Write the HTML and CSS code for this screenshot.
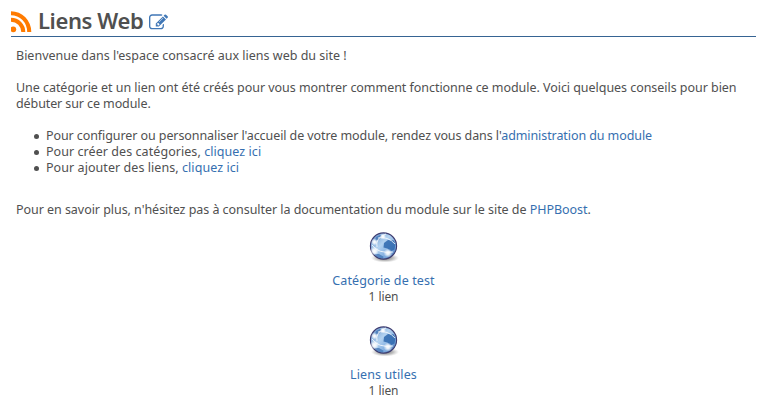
FILE: index.html
```html
<!DOCTYPE html>
<html lang="fr">
<head>
<meta charset="utf-8">
<title>Liens Web</title>
<link rel="stylesheet" href="styles.css">
</head>
<body>
<svg class="defs" width="0" height="0" aria-hidden="true">
  <defs>
    <linearGradient id="sea" x1="0" y1="0" x2="1" y2=".9"><stop offset="0" stop-color="#5d8dc8"/><stop offset=".45" stop-color="#b3d2f0"/><stop offset=".75" stop-color="#7facdf"/><stop offset="1" stop-color="#3a68aa"/></linearGradient>
    <radialGradient id="shade"><stop offset="0" stop-color="#444" stop-opacity=".85"/><stop offset=".6" stop-color="#777" stop-opacity=".45"/><stop offset="1" stop-color="#999" stop-opacity="0"/></radialGradient>
    <radialGradient id="glow"><stop offset="0" stop-color="#fff"/><stop offset=".4" stop-color="#fff" stop-opacity=".8"/><stop offset="1" stop-color="#fff" stop-opacity="0"/></radialGradient>
    <symbol id="globe" viewBox="0 0 32 32">
      <ellipse cx="17" cy="27" rx="14" ry="4.500" fill="url(#shade)"/>
      <circle cx="15.500" cy="15" r="13.100" fill="url(#sea)" stroke="#3d3c70" stroke-width="1.100"/>
      <path d="M16 12l4-3 6 .5 1.500 4-1 5-4 2-3-3-4-1z" fill="#2f68ae" opacity=".85"/>
      <path d="M8 6l4-2 2 1-2 3-5 2zM6 23l5 0 5 3-2 1.500-4-1z" fill="#3a6fb2" opacity=".7"/>
      <path d="M10 7Q20 5 27 13M4 14Q10 23 25 21M18 3Q7 7 9 16" fill="none" stroke="#fff" stroke-width="1" opacity=".8"/>
      <circle cx="6.500" cy="11" r="3.500" fill="url(#glow)"/>
      <circle cx="6.500" cy="20" r="4.500" fill="url(#glow)"/>
      <circle cx="20" cy="22" r="4.500" fill="url(#glow)"/>
      <circle cx="15" cy="5.500" r="3" fill="url(#glow)"/>
    </symbol>
  </defs>
</svg>
<main class="module">
  <header class="title">
    <svg class="rss" viewBox="0 0 21 22" fill="#ff7b00"><circle cx="2.300" cy="18.300" r="2.900"/><path d="M0 6.700A14.300 14.300 0 0 1 14.300 21H10.300A10.300 10.300 0 0 0 0 10.700zM0 .2A20.300 20.800 0 0 1 20.300 21H16.200A16.200 16.800 0 0 0 0 4.200z"/></svg>
    <h1>Liens Web</h1>
    <svg class="edit" viewBox="0 0 1792 1792" fill="#4077b6"><path d="M888 1184l116-116-152-152-116 116v56h96v96h56zm440-720q-16-16-33 1l-350 350q-17 17-1 33t33-1l350-350q17-17 1-33zm80 594v190q0 119-84.500 203.500t-203.500 84.500h-832q-119 0-203.500-84.500t-84.500-203.500v-832q0-119 84.500-203.500t203.500-84.500h832q63 0 117 25 15 7 18 23 3 17-9 29l-49 49q-14 14-32 8-23-6-45-6h-832q-66 0-113 47t-47 113v832q0 66 47 113t113 47h832q66 0 113-47t47-113v-126q0-13 9-22l64-64q15-15 35-7t20 29zm-96-738l288 288-672 672h-288v-288zm444 132l-92 92-288-288 92-92q28-28 68-28t68 28l152 152q28 28 28 68t-28 68z"/></svg>
  </header>
  <section class="content">
    <p>Bienvenue dans l'espace consacré aux liens web du site !</p>
    <p class="intro">Une catégorie et un lien ont été créés pour vous montrer comment fonctionne ce module. Voici quelques conseils pour bien<br><span class="second">débuter sur ce module.</span></p>
    <ul>
      <li class="config">Pour configurer ou personnaliser l'accueil de votre module, rendez vous dans l'<a>administration du module</a></li>
      <li>Pour créer des catégories, <a>cliquez ici</a></li>
      <li>Pour ajouter des liens, <a>cliquez ici</a></li>
    </ul>
    <p class="more">Pour en savoir plus, n'hésitez pas à consulter la documentation du module sur le site de <a>PHPBoost</a>.</p>
  </section>
  <section class="categories">
    <div class="category"><svg class="globe"><use href="#globe"/></svg><a>Catégorie de test</a><span class="count">1 lien</span></div>
    <div class="category"><svg class="globe"><use href="#globe"/></svg><a>Liens utiles</a><span class="count">1 lien</span></div>
  </section>
</main>
</body>
</html>
```
FILE: styles.css
```css
body { margin: 0; background: #fff; color: #505050; font: 12.5px/16px "Noto Sans", "Open Sans", sans-serif; }
.defs { display: block; }
.module { margin: 0 8px 0 11px; }
.title { display: flex; align-items: flex-start; box-sizing: border-box; height: 37px; padding-top: 11px; border-bottom: 1px solid #366493; }
.rss { width: 21px; height: 22px; }
h1 { margin: -2px 0 0 6px; width: 105px; font-size: 22px; font-weight: 600; line-height: 22px; white-space: nowrap; letter-spacing: -.4px; }
.edit { width: 19px; height: 19px; margin: 2px 0 0 6px; }
.content { padding: 11px 0 0 5px; white-space: nowrap; }
p { margin: 0 0 16px; }
ul { margin: 0 0 26px; padding-left: 30px; list-style: none; }
li { display: block; letter-spacing: .06px; }
li::before { content: ""; display: inline-block; width: 5px; height: 5px; margin: 0 7px 1.500px -12px; border-radius: 50%; background: #505050; }
a { color: #366fb0; }
.intro, .more { letter-spacing: -.045px; }
.second { letter-spacing: -.1px; }
.config { letter-spacing: -.085px; }
.categories { display: flex; flex-direction: column; align-items: center; }
.category { display: flex; flex-direction: column; align-items: center; height: 94px; letter-spacing: .11px; }
.globe { width: 32px; height: 32px; margin: -3px 0 10px; }
.count { font-size: 12px; letter-spacing: -.1px; }
```
